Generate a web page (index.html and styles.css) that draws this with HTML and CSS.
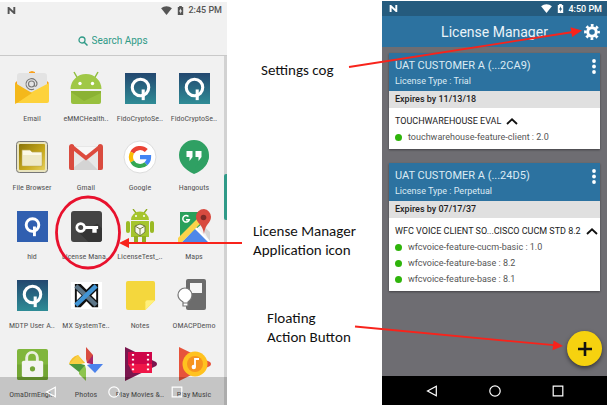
FILE: index.html
```html
<!DOCTYPE html>
<html lang="en">
<head>
<meta charset="utf-8">
<title>License Manager overview</title>
<link rel="stylesheet" href="styles.css">
</head>
<body>
<svg class="defs" aria-hidden="true">
  <defs>
    <linearGradient id="teal" x1="0" y1="0" x2="0" y2="1"><stop offset="0" stop-color="#23476f"/><stop offset="1" stop-color="#2f8c96"/></linearGradient>
    <linearGradient id="gold" x1="0" y1="0" x2="1" y2="1"><stop offset="0" stop-color="#8a7408"/><stop offset=".6" stop-color="#c9aa1c"/><stop offset="1" stop-color="#e6cf5a"/></linearGradient>
    <symbol id="q" viewBox="0 0 32 32"><path fill="url(#teal)" d="M0 0h32v32H0z"/><circle cx="16" cy="15" r="8.500" fill="none" stroke="#fff" stroke-width="3.200"/><path d="M18.800 17v11" stroke="#fff" stroke-width="3.200"/></symbol>
    <symbol id="wifi" viewBox="0 0 12 10"><path d="M0 2.500C3.500-.5 8.500-.5 12 2.500L6 10z"/></symbol>
    <symbol id="battery" viewBox="0 0 7 10"><path fill-rule="evenodd" d="M2 0h3v1h1.500v9H.5V1H2zM4 2.500L1.800 6h1.400v2.500L5.300 5H4z"/></symbol>
    <symbol id="n" viewBox="0 0 9 8"><path d="M1.200 8V1l6.500 6V0" fill="none" stroke="currentColor" stroke-width="2.200"/></symbol>
    <symbol id="chevron" viewBox="0 0 12 7"><path d="M1 6l5-4.600L11 6" fill="none" stroke="#111" stroke-width="1.900"/></symbol>
    <symbol id="dots" viewBox="0 0 4 15"><circle cx="2" cy="2" r="1.900"/><circle cx="2" cy="7.500" r="1.900"/><circle cx="2" cy="13" r="1.900"/></symbol>
    <symbol id="back" viewBox="0 0 12 12"><path d="M10.300 1.200v9.600L1.500 6z" fill="none" stroke="#fff" stroke-width="1.200"/></symbol>
    <symbol id="home" viewBox="0 0 12 12"><circle cx="6" cy="6" r="5.200" fill="none" stroke="#fff" stroke-width="1.200"/></symbol>
    <symbol id="recent" viewBox="0 0 12 12"><path d="M1.200 1.200h9.600v9.600H1.200z" fill="none" stroke="#fff" stroke-width="1.200"/></symbol>
  </defs>
</svg>
<main class="figure">
  <section class="phone launcher">
    <div class="status">
      <svg class="status-n"><use href="#n"/></svg>
      <svg class="status-wifi"><use href="#wifi"/></svg>
      <svg class="status-battery"><use href="#battery"/></svg>
      <time>2:45 PM</time>
    </div>
    <label class="search">
      <svg viewBox="0 0 10 10"><circle cx="4" cy="4" r="3" fill="none" stroke="#2f9a87" stroke-width="1.300"/><path d="M6.200 6.200L9.500 9.500" stroke="#2f9a87" stroke-width="1.500"/></svg>
      <input type="text" placeholder="Search Apps" aria-label="Search Apps">
    </label>
    <div class="drawer">
      <div class="apps">
        <button class="app"><svg viewBox="0 0 34 34"><path fill="#f9a01b" d="M14 1l3-1 3 1v3h-6zM0 12l4-4v8zM34 12l-4-4v8z"/><path fill="#e3e3e3" d="M2 5Q2 2 5 2h24q3 0 3 3v18H2z"/><path fill="#f6bd22" d="M0 12l17 12L0 33z"/><path fill="#fdd23c" d="M34 12L15 22 2 32h30q2 0 2-2z"/><path fill="#f4b81b" d="M0 12v18q0 2 2 2L17 22z"/><path d="M19.500 13a3 3 0 1 0-6 0 3 3 0 0 0 6 0v1.500q1.600 2 2.500-1.500a5.500 5.500 0 1 0-3 5" fill="none" stroke="#777" stroke-width="1.100"/></svg><span>Email</span></button>
        <button class="app"><svg viewBox="0 0 34 34"><path stroke="#8fbf3c" stroke-width="1.500" d="M5 1l4 7M29 1l-4 7"/><path fill="#a0c847" d="M1.500 18a15.500 15 0 0 1 31 0z"/><path fill="#98c03e" d="M2 20h30v11q0 2-2 2H4q-2 0-2-2z"/><path fill="#8bb234" d="M2 20h30v2L15 30 2 21z"/><circle cx="11" cy="12.500" r="1.700" fill="#fff"/><circle cx="23.500" cy="12.500" r="1.700" fill="#fff"/></svg><span>eMMCHealth..</span></button>
        <button class="app"><svg class="tile"><use href="#q"/></svg><span>FidoCryptoSe..</span></button>
        <button class="app"><svg class="tile"><use href="#q"/></svg><span>FidoCryptoSe..</span></button>

        <button class="app"><svg viewBox="0 0 34 34"><rect x="1.500" y="1.500" width="31" height="31" rx="3" fill="#e9e4be" stroke="#777"/><rect x="4" y="4" width="26" height="26" rx="1" fill="url(#gold)"/><path fill="#fbf8e6" stroke="#b9a84a" stroke-width=".7" d="M7 10h8l2 2h10v14H7z"/><path fill="#eee9c8" d="M8 15h18v10H8z"/></svg><span>File Browser</span></button>
        <button class="app"><svg class="wide" viewBox="0 0 36 34"><path fill="#e7e7e7" d="M1 6h34v24H1z"/><path fill="#f7f7f7" d="M6 7h24L18 18z"/><path fill="#d4d4d4" d="M18 18l12 12H5v-2z"/><path fill="#d94b3f" d="M1 7q0-3 3-3l2 1v25H3q-2 0-2-2zM35 7q0-3-3-3l-2 1v25h3q2 0 2-2z"/><path d="M3 6l15 12L33 6" fill="none" stroke="#dd4b3e" stroke-width="4"/></svg><span>Gmail</span></button>
        <button class="app"><svg viewBox="0 0 34 34"><circle cx="17" cy="17" r="16" fill="#fff" stroke="#ddd"/><g fill="none" stroke-width="4.200"><path stroke="#ea4335" d="M9.200 12.500A9 9 0 0 1 23.300 10.600"/><path stroke="#fbbc05" d="M9.200 21.500A9 9 0 0 1 9.200 12.500"/><path stroke="#34a853" d="M9.200 21.500A9 9 0 0 0 23 23.700"/><path stroke="#4285f4" d="M17 17.200h9A9 9 0 0 1 23 23.700"/></g></svg><span>Google</span></button>
        <button class="app"><svg viewBox="0 0 34 34"><path fill="#2fa063" d="M17 0a15 15 0 0 1 0 30v4Q2 27 2 15A15 15 0 0 1 17 0z"/><path fill="#2fa063" d="M32 15q0 13-15 19v-6z"/><path fill="#fff" d="M9.500 11h6v6l-3 4v-4h-3zM18.500 11h6v6l-3 4v-4h-3z"/></svg><span>Hangouts</span></button>

        <button class="app"><svg class="tile" viewBox="0 0 32 32"><path fill="#305fb0" d="M0 0h32v32H0z"/><circle cx="16" cy="14.500" r="6.500" fill="none" stroke="#fff" stroke-width="3"/><path d="M18 16v10" stroke="#fff" stroke-width="3"/></svg><span>hid</span></button>
        <button class="app"><svg class="tile" viewBox="0 0 32 32"><rect width="32" height="32" rx="3" fill="#444"/><path fill="#353535" d="M6 20l12 12h11q3 0 3-3V18l-5-5-12 7z"/><circle cx="10" cy="17" r="4" fill="none" stroke="#fff" stroke-width="2.800"/><path fill="#fff" d="M14 15.500h14v3h-1.500v4H22v-4h-8z"/></svg><span>License Mana..</span></button>
        <button class="app"><svg viewBox="0 0 34 34"><path stroke="#8dab1e" stroke-width="1.300" d="M10 0l3 4M24 0l-3 4"/><path fill="#a5c52c" d="M8 11a9 8.500 0 0 1 18 0zM8 12h18v16H8z"/><rect x="3" y="12" width="4" height="12" rx="2" fill="#9aba24"/><rect x="27" y="12" width="4" height="12" rx="2" fill="#9aba24"/><path fill="#91ad22" d="M11 27h4v7h-4zM19 27h4v7h-4z"/><circle cx="13" cy="7" r="1" fill="#fff"/><circle cx="21" cy="7" r="1" fill="#fff"/><path fill="#f6f6ec" stroke="#737f3b" d="M17 15l5 2v6l-5 4-5-4v-6z"/><path d="M12 17l5 3 5-3M17 20v7" fill="none" stroke="#737f3b"/></svg><span>LicenseTest_..</span></button>
        <button class="app"><svg viewBox="0 0 34 34"><path fill="#29a05b" d="M3 3h22v12L3 33z"/><path fill="#d7d7d7" d="M22 13l11 10v10z"/><path fill="#fff" d="M18 17l15 15v1H17z"/><path fill="#4f87e8" d="M18 20l13 13H5z"/><path fill="#fbd34b" d="M1 29L23 7l4 4L5 33H1z"/><path d="M11.500 7.500a3.300 3.300 0 1 0 .8 3.200H9" fill="none" stroke="#fff" stroke-width="1.500"/><path fill="#d84a3f" d="M27 0a8 8 0 0 1 7 8c0 6-6 7-7 17-1-10-8-11-8-17a8 8 0 0 1 8-8z"/><circle cx="26.500" cy="8.500" r="2.800" fill="#7e2b27"/></svg><span>Maps</span></button>

        <button class="app"><svg class="tile"><use href="#q"/></svg><span>MDTP User A..</span></button>
        <button class="app"><svg class="tile" viewBox="0 0 32 32"><path fill="#fff" d="M0 2h32v28H0z"/><path fill="#111" d="M4 4h6l6 6 6-6h6v24h-6l-6-6-6 6H4z"/><path fill="#fff" d="M6 11l5 5-5 5zM26 11l-5 5 5 5z"/><path d="M5 6l21 20" stroke="#5d7688" stroke-width="4.500"/><path d="M5 26L26 6" stroke="#4295d5" stroke-width="4.500"/></svg><span>MX SystemTe..</span></button>
        <button class="app"><svg class="tile" viewBox="0 0 32 32"><path fill="#f4d73d" d="M3 1h26q2 0 2 2v18L21 31H3q-2 0-2-2V3q0-2 2-2z"/><path fill="#fff07c" d="M21 31V23q0-2 2-2h8z"/></svg><span>Notes</span></button>
        <button class="app"><svg viewBox="0 0 34 34"><rect x="9" y="1" width="20" height="31" rx="2" fill="#6c6c6c"/><rect x="13" y="5" width="12" height="10" fill="#f5f5f5"/><path fill="#fff" stroke="#777" stroke-width="1.200" d="M6 28v-4q-5-3-5-7a7 7 0 0 1 14 0q0 4-4 7v4z"/><path stroke="#777" d="M6 25h5"/></svg><span>OMACPDemo</span></button>

        <button class="app"><svg class="tile" viewBox="0 0 32 32"><rect width="32" height="32" rx="2" fill="#80b63c"/><path fill="#73a634" d="M0 16h32v14q0 2-2 2H2q-2 0-2-2z"/><path d="M10 13V9a5.500 5.500 0 0 1 11 0v4" fill="none" stroke="#e9efdf" stroke-width="3"/><rect x="5" y="12" width="22" height="17" rx="2" fill="#f3f4f0"/><circle cx="16" cy="20.500" r="2.700" fill="#74a637"/></svg><span>OmaDrmEngi..</span></button>
        <button class="app"><svg class="wide" viewBox="0 0 36 34"><path fill="#d84b3f" d="M18 0l7 8v9h-7z"/><path fill="#f5bd2d" d="M1 17q2-7 9-9l8 9z"/><path fill="#f9cf42" d="M1 17L10 8l6 9z"/><path fill="#8dc44d" d="M18 34l-7-7v-5l7-5z"/><path fill="#4c983f" d="M1 17h17l-7 8z"/><path fill="#4b82ec" d="M18 17h17l-8 9z"/><path fill="#a72669" d="M18 17l7-9v9z"/><path fill="#fff" d="M18 12l1 4 4 1-4 1-1 4-1-4-4-1 4-1z"/></svg><span>Photos</span></button>
        <button class="app"><svg viewBox="0 0 34 34"><path fill="#7b164e" d="M2 0l31 15q2 2 0 4L2 34z"/><path fill="#ce0548" d="M5 5h24v12H5z"/><path fill="#ef1648" d="M5 17h24v9H10z"/><path stroke="#fff" stroke-width="2.200" stroke-dasharray="1.800 3" d="M10 7v19M25 7v19"/></svg><span>Play Movies &amp;..</span></button>
        <button class="app"><svg viewBox="0 0 34 34"><path fill="#e7533b" d="M2 0l31 15q2 2 0 4L2 34z"/><circle cx="18" cy="17" r="12.500" fill="#ffc21f"/><circle cx="18" cy="17" r="8" fill="#f7941e"/><path d="M18 20v-8h4" fill="none" stroke="#fff" stroke-width="1.800"/><circle cx="16.800" cy="20" r="2.200" fill="#fff"/></svg><span>Play Music</span></button>
      </div>
      <div class="scroll-track"><div class="scroll-thumb"></div></div>
    </div>
    <nav class="navbar overlay-nav">
      <button aria-label="Back"><svg><use href="#back"/></svg></button>
      <button aria-label="Home"><svg><use href="#home"/></svg></button>
      <button aria-label="Recent apps"><svg><use href="#recent"/></svg></button>
    </nav>
  </section>

  <section class="notes">
    <p class="note-cog">Settings cog</p>
    <p class="note-app">License Manager<br>Application icon</p>
    <p class="note-fab">Floating<br>Action Button</p>
  </section>

  <section class="phone manager">
    <div class="status">
      <svg class="status-n"><use href="#n"/></svg>
      <svg class="status-wifi"><use href="#wifi"/></svg>
      <svg class="status-battery"><use href="#battery"/></svg>
      <time>4:50 PM</time>
    </div>
    <header class="appbar">
      <h1>License Manager</h1>
      <button class="cog" aria-label="Settings"><svg viewBox="0 0 16 16"><circle cx="8" cy="8" r="6.600" fill="none" stroke="#fff" stroke-width="2.600" stroke-dasharray="2.700 2.483" stroke-dashoffset="1.350"/><circle cx="8" cy="8" r="4.300" fill="none" stroke="#fff" stroke-width="3"/></svg></button>
    </header>
    <div class="licenses">
      <article class="card">
        <header class="card-head">
          <div><h2>UAT CUSTOMER A (...2CA9)</h2><p>License Type : Trial</p></div>
          <button class="more" aria-label="More options"><svg><use href="#dots"/></svg></button>
        </header>
        <p class="expires">Expires by 11/13/18</p>
        <div class="card-body">
          <button class="group">TOUCHWAREHOUSE EVAL <svg><use href="#chevron"/></svg></button>
          <ul><li>touchwarehouse-feature-client : 2.0</li></ul>
        </div>
      </article>
      <article class="card">
        <header class="card-head">
          <div><h2>UAT CUSTOMER A (...24D5)</h2><p>License Type : Perpetual</p></div>
          <button class="more" aria-label="More options"><svg><use href="#dots"/></svg></button>
        </header>
        <p class="expires">Expires by 07/17/37</p>
        <div class="card-body">
          <button class="group">WFC VOICE CLIENT SO...CISCO CUCM STD 8.2 <svg><use href="#chevron"/></svg></button>
          <ul><li>wfcvoice-feature-cucm-basic : 1.0</li><li>wfcvoice-feature-base : 8.2</li><li>wfcvoice-feature-base : 8.1</li></ul>
        </div>
      </article>
    </div>
    <button class="fab" aria-label="Add license"><svg viewBox="0 0 16 16"><path d="M8 1v14M1 8h14" stroke="#111" stroke-width="2.600"/></svg></button>
    <nav class="navbar">
      <button aria-label="Back"><svg><use href="#back"/></svg></button>
      <button aria-label="Home"><svg><use href="#home"/></svg></button>
      <button aria-label="Recent apps"><svg><use href="#recent"/></svg></button>
    </nav>
  </section>

  <svg class="arrows" viewBox="0 0 607 405" aria-hidden="true">
    <ellipse cx="88" cy="232.500" rx="31.500" ry="35.500" fill="none" stroke="#e8112d" stroke-width="2.800"/>
    <g stroke="#f8231b" stroke-width="1.800"><path d="M349 67L573 32"/><path d="M242 243H127"/><path d="M355 326.500L554 345.200"/></g>
    <g fill="#f8231b"><path d="M582 30.500l-11.500-3.200 1.600 9.600z"/><path d="M119 243l10-5v10z"/><path d="M563 346l-9.500-5.500-1 9.800z"/></g>
  </svg>
</main>
</body>
</html>
```

FILE: styles.css
```css
* { box-sizing: border-box; }
body {
  margin: 0;
  background: #fff;
  font-family: Roboto, sans-serif;
  font-size: 9px;
  line-height: 12px;
}
h1, h2, p, ul { margin: 0; padding: 0; font-weight: 400; }
ul { list-style: none; }
button {
  border: 0;
  padding: 0;
  background: none;
  color: inherit;
  font: inherit;
}
svg { display: block; flex: none; fill: currentColor; }
.defs { position: absolute; width: 0; height: 0; }

.figure {
  position: relative;
  display: grid;
  grid-template-columns: minmax(0, 227fr) minmax(0, 155fr) minmax(0, 225fr);
  min-height: 100vh;
}
.arrows {
  position: absolute;
  top: 0;
  left: 0;
  width: 100%;
  pointer-events: none;
}
.phone { position: relative; display: flex; flex-direction: column; }

/* Status bar */
.status {
  display: flex;
  align-items: center;
  height: 16px;
  padding: 0 5px 0 7px;
  font-weight: 500;
}
.status-n { width: 9px; height: 7px; margin-right: auto; }
.status-wifi { width: 11px; height: 9px; margin-right: 5px; }
.status-battery { width: 7px; height: 9px; margin-right: 4px; }

/* Launcher */
.launcher { margin-top: 2px; background: #f1f1f1; color: #555; }
.search {
  display: flex;
  align-items: center;
  justify-content: center;
  gap: 4px;
  height: 38px;
  padding-top: 8px;
  border-bottom: 1px solid #c9c9c9;
}
.search svg { width: 10px; height: 10px; }
.search input {
  width: 58px;
  border: 0;
  padding: 0;
  background: none;
  font: 10px/14px Roboto, sans-serif;
  color: #2f9a87;
  outline: 0;
}
.search input::placeholder { color: #2f9a87; opacity: 1; }
.drawer { display: flex; flex: 1; }
.apps {
  flex: 1;
  display: grid;
  grid-template-columns: repeat(4, minmax(0, 1fr));
  align-content: start;
  row-gap: 9px;
  padding: 15px 3px 0 5px;
}
.app {
  display: flex;
  flex-direction: column;
  align-items: center;
  justify-content: space-between;
  height: 60px;
  padding-bottom: 6px;
  line-height: 13px;
}
.app svg { width: 34px; height: 34px; }
.app svg.tile { width: 31px; height: 31px; margin-top: 2px; }
.app svg.wide { width: 36px; }
.app span {
  font-family: "Roboto Condensed", "Liberation Sans Narrow", Roboto, sans-serif;
  font-size: 8px;
  white-space: nowrap;
}
.scroll-track { width: 3px; padding-top: 118px; background: #d2d2d2; }
.scroll-thumb { height: 46px; border-radius: 2px 0 0 2px; background: #309a88; }

/* Navigation bar */
.navbar {
  display: flex;
  align-items: center;
  justify-content: center;
  gap: 51px;
  height: 30px;
  background: #000;
}
.navbar svg { width: 12px; height: 12px; }
.overlay-nav {
  position: absolute;
  right: 0;
  bottom: 0;
  left: 0;
  background: rgba(0, 0, 0, 0.18);
}

/* Annotations */
.notes {
  padding: 61px 0 0 26px;
  font: 15px/19px Carlito, Lato, sans-serif;
  color: #111;
  white-space: nowrap;
}
.note-cog { padding-left: 8px; }
.note-app { padding-top: 142px; }
.note-fab { padding: 49px 0 0 14px; }

/* License manager */
.manager { margin: 1px 0; background: #6e6d72; color: #fff; }
.manager .status { height: 15px; background: #255b7e; }
.appbar {
  display: flex;
  align-items: center;
  height: 31px;
  padding: 0 7px 0 23px;
  background: #2c72a0;
}
.appbar h1 { flex: 1; font-size: 14px; line-height: 20px; text-align: center; color: #eaf3f8; }
.cog svg { width: 16px; height: 16px; }
.licenses { flex: 1; display: flex; flex-direction: column; gap: 14px; padding: 6px 7px 0; }
.card { background: #fff; color: #222; box-shadow: 0 1px 2px rgba(0, 0, 0, 0.4); }
.card-head {
  display: flex;
  align-items: flex-start;
  justify-content: space-between;
  padding: 6px 4px 2px 6px;
  background: #2c72a0;
  color: #dcebf4;
}
.card-head h2 { font-size: 11px; line-height: 14px; }
.card-head p { line-height: 16px; }
.more svg { width: 4px; height: 15px; color: #fff; }
.expires { padding: 0 6px; background: #e0e0e0; font-size: 9px; font-weight: 500; line-height: 17px; }
.card-body { padding: 5px 6px 4px; }
.group { display: flex; align-items: center; gap: 5px; line-height: 16px; white-space: nowrap; }
.group svg { width: 12px; height: 7px; }
.card-body li { display: flex; align-items: center; gap: 6px; line-height: 16px; color: #555; }
.card-body li::before { content: ""; width: 7px; height: 7px; border-radius: 50%; background: #2fb40b; }
.fab {
  position: absolute;
  right: 5px;
  bottom: 40px;
  display: grid;
  place-items: center;
  width: 35px;
  height: 35px;
  border-radius: 50%;
  background: #f6d20f;
  box-shadow: 0 2px 4px rgba(0, 0, 0, 0.5);
}
.fab svg { width: 16px; height: 16px; }
```
